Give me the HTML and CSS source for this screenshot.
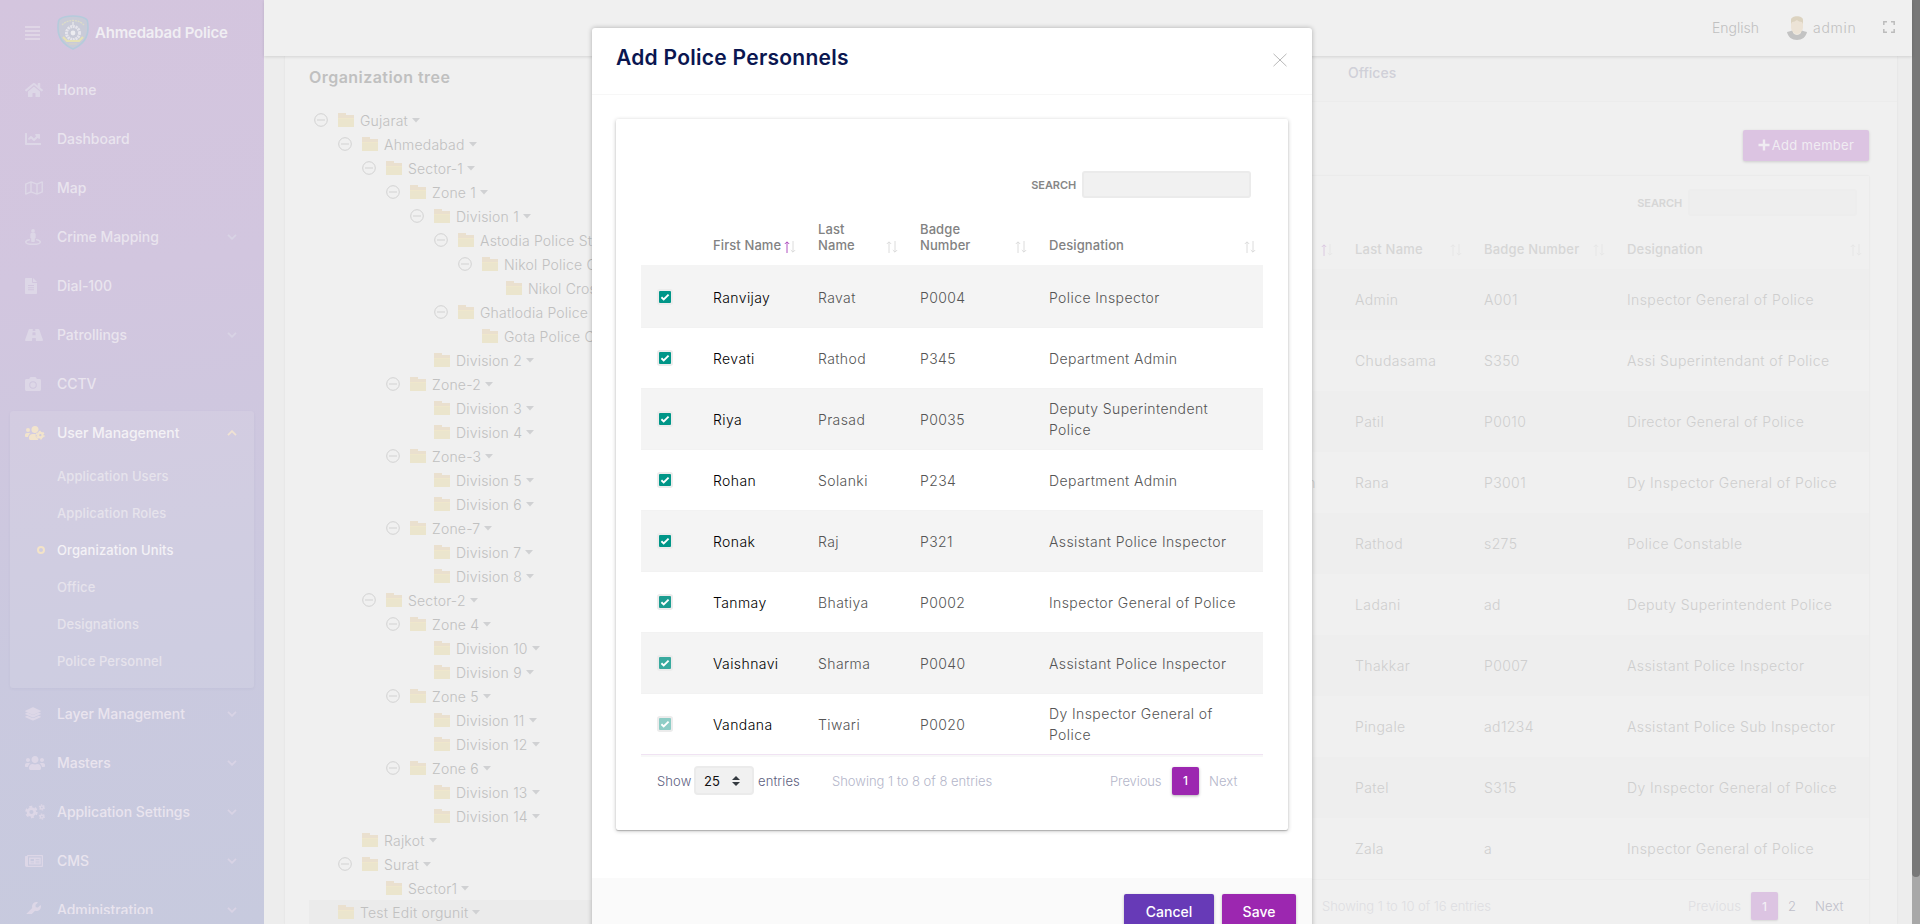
FILE: index.html
```html
<!DOCTYPE html>
<html lang="en">
<head>
<meta charset="utf-8">
<title>Organization Units</title>
<link rel="stylesheet" href="styles.css">
</head>
<body>
<svg class="sprite" aria-hidden="true">
  <symbol id="home" viewBox="0 0 576 512"><path d="M280.37 148.26L96 300.11V464a16 16 0 0 0 16 16l112.06-.29a16 16 0 0 0 15.92-16V368a16 16 0 0 1 16-16h64a16 16 0 0 1 16 16v95.64a16 16 0 0 0 16 16.05L464 480a16 16 0 0 0 16-16V300L295.67 148.26a12.19 12.19 0 0 0-15.3 0zM571.6 251.47L488 182.56V44.05a12 12 0 0 0-12-12h-56a12 12 0 0 0-12 12v72.61L318.47 43a48 48 0 0 0-61 0L4.34 251.47a12 12 0 0 0-1.6 16.9l25.5 31A12 12 0 0 0 45.15 301l235.22-193.74a12.19 12.19 0 0 1 15.3 0L530.9 301a12 12 0 0 0 16.9-1.6l25.5-31a12 12 0 0 0-1.7-16.93z"/></symbol>
  <symbol id="chart" viewBox="0 0 512 512"><path d="M496 384H64V80c0-8.84-7.16-16-16-16H16C7.16 64 0 71.16 0 80v336c0 17.67 14.33 32 32 32h464c8.84 0 16-7.16 16-16v-32c0-8.84-7.16-16-16-16zM464 96H345.94c-21.38 0-32.09 25.85-16.97 40.97l32.4 32.4L288 242.75l-73.37-73.37c-12.5-12.5-32.76-12.5-45.25 0l-68.69 68.69c-6.25 6.25-6.25 16.38 0 22.63l22.62 22.62c6.25 6.25 16.38 6.25 22.63 0L192 237.25l73.37 73.37c12.5 12.5 32.76 12.5 45.25 0l96-96 32.4 32.4c15.12 15.12 40.97 4.41 40.97-16.97V112c.01-8.84-7.15-16-15.99-16z"/></symbol>
  <symbol id="map" viewBox="0 0 576 512"><path fill="none" stroke="currentColor" stroke-width="46" stroke-linejoin="round" d="M24 130L192 62l192 68 168-68v320l-168 68-192-68-168 68zM192 62v320M384 130v320"/></symbol>
  <symbol id="street" viewBox="0 0 512 512"><circle cx="256" cy="60" r="60"/><path d="M216 130h80c26 0 46 20 46 46v92c0 18-12 30-28 36v76c0 20-14 34-32 34h-52c-18 0-32-14-32-34v-76c-16-6-28-18-28-36v-92c0-26 20-46 46-46z"/><path fill="none" stroke="currentColor" stroke-width="48" stroke-linecap="round" d="M140 344C70 358 24 378 24 412c0 46 104 76 232 76s232-30 232-76c0-34-46-54-116-68"/></symbol>
  <symbol id="file" viewBox="0 0 384 512"><path fill-rule="evenodd" d="M24 0h200v136c0 13 11 24 24 24h136v328c0 13-11 24-24 24H24c-13 0-24-11-24-24V24C0 11 11 0 24 0zM96 224v32h192v-32zM96 292v32h192v-32zM96 360v32h192v-32zM256 0l128 128H256z"/></symbol>
  <symbol id="road" viewBox="0 0 576 512"><path fill-rule="evenodd" d="M150 64h100l-4 60h84l-4-60h100c18 0 28 10 34 24l112 320c8 22-4 40-26 40H352l-8-96H232l-8 96H30c-22 0-34-18-26-40L116 88c6-14 16-24 34-24zM242 170l-6 96h104l-6-96z"/></symbol>
  <symbol id="camera" viewBox="0 0 512 512"><path fill-rule="evenodd" d="M512 144v288c0 26-22 48-48 48H48c-26 0-48-22-48-48V144c0-26 22-48 48-48h88l12-33c7-19 25-31 45-31h126c20 0 38 12 45 31l12 33h88c26 0 48 22 48 48zM376 288a120 120 0 1 0-240 0 120 120 0 0 0 240 0zm-32 0a88 88 0 1 1-176 0 88 88 0 0 1 176 0z"/></symbol>
  <symbol id="users" viewBox="0 0 640 512"><path d="M96 224c35.3 0 64-28.7 64-64s-28.7-64-64-64-64 28.7-64 64 28.7 64 64 64zm448 0c35.3 0 64-28.7 64-64s-28.7-64-64-64-64 28.7-64 64 28.7 64 64 64zm32 32h-64c-17.6 0-33.5 7.1-45.1 18.6 40.3 22.1 68.9 62 75.1 109.4h66c17.7 0 32-14.3 32-32v-32c0-35.3-28.7-64-64-64zm-256 0c61.9 0 112-50.1 112-112S381.9 32 320 32 208 82.1 208 144s50.1 112 112 112zm76.8 32h-8.3c-20.8 10-43.9 16-68.5 16s-47.6-6-68.5-16h-8.3C179.6 288 128 339.6 128 403.2V432c0 26.5 21.5 48 48 48h288c26.5 0 48-21.5 48-48v-28.8c0-63.6-51.6-115.2-115.2-115.2zm-223.7-13.4C161.5 263.1 145.6 256 128 256H64c-35.3 0-64 28.7-64 64v32c0 17.7 14.3 32 32 32h65.9c6.3-47.4 34.9-87.3 75.2-109.4z"/></symbol>
  <symbol id="userscog" viewBox="0 0 640 512"><circle cx="96" cy="160" r="64"/><circle cx="320" cy="144" r="112"/><path d="M173 274.600C161.500 263.100 145.600 256 128 256H64c-35.300 0-64 28.700-64 64v32c0 17.700 14.300 32 32 32h65.900c6.300-47.400 34.900-87.300 75.100-109.400zM251 288h-8c-63 0-115 52-115 115v29c0 26 22 48 48 48h250l-70-192z"/><circle cx="490" cy="325" r="112" fill="#cfcadf"/><circle cx="490" cy="325" r="142" fill="none" stroke="#cfcadf" stroke-width="18"/><circle cx="490" cy="325" r="72" fill="none" stroke="currentColor" stroke-width="70"/><circle cx="490" cy="325" r="120" fill="none" stroke="currentColor" stroke-width="44" stroke-dasharray="66 59.600"/></symbol>
  <symbol id="layers" viewBox="0 0 512 512"><path d="M12 148L244 42q12-5 24 0l232 106q20 12 0 24L268 278q-12 5-24 0L12 172q-20-12 0-24z"/><path d="M12 236l58-27 161 73q25 10 50 0l161-73 58 27q20 12 0 24L268 366q-12 5-24 0L12 260q-20-12 0-24z"/><path d="M12 334l58-26 161 73q25 10 50 0l161-73 58 26q20 12 0 24L268 464q-12 5-24 0L12 358q-20-12 0-24z"/></symbol>
  <symbol id="cogs" viewBox="0 0 640 512"><g fill="none" stroke="currentColor"><circle cx="205" cy="256" r="108" stroke-width="84"/><circle cx="205" cy="256" r="168" stroke-width="64" stroke-dasharray="94 82"/><circle cx="540" cy="110" r="50" stroke-width="46"/><circle cx="540" cy="110" r="82" stroke-width="36" stroke-dasharray="44 42"/><circle cx="540" cy="402" r="50" stroke-width="46"/><circle cx="540" cy="402" r="82" stroke-width="36" stroke-dasharray="44 42"/></g></symbol>
  <symbol id="news" viewBox="0 0 576 512"><path fill-rule="evenodd" d="M552 64H88c-13 0-24 11-24 24v8H24c-13 0-24 11-24 24v272c0 31 25 56 56 56h496c13 0 24-11 24-24V88c0-13-11-24-24-24zM96 104h440v304H96zM140 144h352c8 0 12 4 12 12v200c0 8-4 12-12 12H140c-8 0-12-4-12-12V156c0-8 4-12 12-12zM176 192v70h110v-70zM340 192v24h120v-24zM340 250v24h120v-24zM176 304v24h110v-24zM340 304v24h120v-24z"/></symbol>
  <symbol id="wrench" viewBox="0 0 512 512"><path d="M507.730 109.100c-2.240-9.030-13.540-12.090-20.120-5.510l-74.360 74.360-67.880-11.310-11.310-67.880 74.360-74.360c6.620-6.620 3.430-17.900-5.660-20.160-47.380-11.740-99.550.91-136.580 37.930-39.640 39.640-50.550 97.100-34.050 147.200L18.740 402.760c-24.990 24.990-24.990 65.510 0 90.500 24.990 24.990 65.510 24.990 90.500 0l213.210-213.210c50.120 16.710 107.470 5.680 147.370-34.220 37.070-37.070 49.700-89.320 37.910-136.730z"/></symbol>
  <symbol id="chev" viewBox="0 0 10 6"><path fill="none" stroke="currentColor" stroke-width="1.800" d="M1 .8L5 4.800 9 .8"/></symbol>
  <symbol id="minus" viewBox="0 0 14 14"><circle cx="7" cy="7" r="6.300" fill="none" stroke="#d2d2d2"/><path stroke="#d2d2d2" d="M3 7h8"/></symbol>
  <symbol id="folder" viewBox="0 0 16 14"><path fill="#eae0cf" d="M0 0h8v2h8v12H0z"/><path fill="#ebe5cd" d="M0 5h16v9H0z"/><path fill="#efe7cc" d="M0 5h16v1H0z"/></symbol>
  <symbol id="caret" viewBox="0 0 8 5"><path fill="#d0d1d3" d="M0 0h8L4 4.500z"/></symbol>
  <symbol id="up" viewBox="0 0 6 12"><path fill="none" stroke="currentColor" stroke-width=".8" d="M3 12V1M.8 3L3 .8 5.200 3"/></symbol>
  <symbol id="down" viewBox="0 0 6 12"><path fill="none" stroke="currentColor" stroke-width=".8" d="M3 0v11M.8 9L3 11.200 5.200 9"/></symbol>
  <symbol id="check" viewBox="0 0 12 12"><path fill="none" stroke="#fff" stroke-width="1.900" d="M2.400 6.200l2.300 2.200 4.900-4.800"/></symbol>
</svg>

<div class="app">
  <aside class="sidebar">
    <div class="brand">
      <svg class="burger" viewBox="0 0 15 14"><path stroke="currentColor" stroke-width="1.600" d="M0 1h15M0 5h15M0 9h15M0 13h15"/></svg>
      <svg class="logo" viewBox="0 0 32 35"><path fill="#c9cbd8" stroke="#b5cbdc" stroke-width="1.600" d="M16 1c5 0 10 1 13 3l1 1c1 2 1 5 1 8 0 10-6 17-15 21C7 30 1 23 1 13c0-3 0-6 1-8l1-1C6 2 11 1 16 1z"/><path fill="none" stroke="#dcdcc8" stroke-width="1.400" stroke-dasharray="2 .8" d="M5 10C11 4 21 4 27 10"/><circle cx="16" cy="18" r="6.500" fill="none" stroke="#e6e5ec" stroke-width="3" stroke-dasharray="2 .7"/><path fill="#e2e2e8" d="M15.200 7h1.600v4h-1.600z"/><circle cx="16" cy="18" r="2.400" fill="#ececf0"/><path fill="none" stroke="#e5e1b4" stroke-width="2.200" d="M6 22l4 4h12l4-4"/><path stroke="#d8d4c4" d="M12 29h8"/></svg>
      <span>Ahmedabad Police</span>
    </div>
    <nav class="nav">
      <a class="item"><svg class="i9"><use href="#home"/></svg><span>Home</span></a>
      <a class="item"><svg class="i8"><use href="#chart"/></svg><span>Dashboard</span></a>
      <a class="item"><svg class="i9"><use href="#map"/></svg><span>Map</span></a>
      <a class="item"><svg class="i8"><use href="#street"/></svg><span>Crime Mapping</span><svg class="chev"><use href="#chev"/></svg></a>
      <a class="item"><svg class="i6"><use href="#file"/></svg><span>Dial-100</span></a>
      <a class="item"><svg class="i9"><use href="#road"/></svg><span>Patrollings</span><svg class="chev"><use href="#chev"/></svg></a>
      <a class="item"><svg class="i8"><use href="#camera"/></svg><span>CCTV</span></a>
      <div class="group">
        <a class="item open"><svg class="i10"><use href="#userscog"/></svg><span>User Management</span><svg class="chev"><use href="#chev"/></svg></a>
        <a class="sub">Application Users</a>
        <a class="sub">Application Roles</a>
        <a class="sub current">Organization Units</a>
        <a class="sub">Office</a>
        <a class="sub">Designations</a>
        <a class="sub">Police Personnel</a>
      </div>
      <a class="item"><svg class="i8"><use href="#layers"/></svg><span>Layer Management</span><svg class="chev"><use href="#chev"/></svg></a>
      <a class="item"><svg class="i10"><use href="#users"/></svg><span>Masters</span><svg class="chev"><use href="#chev"/></svg></a>
      <a class="item"><svg class="i10"><use href="#cogs"/></svg><span>Application Settings</span><svg class="chev"><use href="#chev"/></svg></a>
      <a class="item"><svg class="i9"><use href="#news"/></svg><span>CMS</span><svg class="chev"><use href="#chev"/></svg></a>
      <a class="item"><svg class="i8"><use href="#wrench"/></svg><span>Administration</span><svg class="chev"><use href="#chev"/></svg></a>
    </nav>
  </aside>

  <div class="main">
    <header class="topbar">
      <span class="lang">English</span>
      <svg class="avatar" viewBox="0 0 20 24"><path fill="#c3c3c3" d="M0 16c3-1 5-1 6-2h8c1 1 3 1 6 2-1 5-5 8-10 8S1 21 0 16z"/><path fill="#f0ebe2" d="M6 13h8v4q-4 4-8 0z"/><path fill="#ece3d6" d="M4 5c0-4 12-4 12 0v6c0 4-3 7-6 7s-6-3-6-7z"/><path fill="#dcd3c0" d="M4 8V4c0-5 12-5 12 0v4l-1-2c-2 0-4-1-5-2-2 1-3 2-5 2z"/></svg>
      <span class="user">admin</span>
      <svg class="full" viewBox="0 0 12 12"><path fill="none" stroke="#bcbcbc" stroke-width="1.500" d="M.8 4V.8H4M8 .8h3.200V4M11.200 8v3.200H8M4 11.200H.8V8"/></svg>
    </header>
    <div class="content">
      <section class="tree">
        <h2>Organization tree</h2>
        <div class="node l0"><svg class="tg"><use href="#minus"/></svg><svg class="fd"><use href="#folder"/></svg>Gujarat<svg class="ct"><use href="#caret"/></svg></div>
        <div class="node l1"><svg class="tg"><use href="#minus"/></svg><svg class="fd"><use href="#folder"/></svg>Ahmedabad<svg class="ct"><use href="#caret"/></svg></div>
        <div class="node l2"><svg class="tg"><use href="#minus"/></svg><svg class="fd"><use href="#folder"/></svg>Sector-1<svg class="ct"><use href="#caret"/></svg></div>
        <div class="node l3"><svg class="tg"><use href="#minus"/></svg><svg class="fd"><use href="#folder"/></svg>Zone 1<svg class="ct"><use href="#caret"/></svg></div>
        <div class="node l4"><svg class="tg"><use href="#minus"/></svg><svg class="fd"><use href="#folder"/></svg>Division 1<svg class="ct"><use href="#caret"/></svg></div>
        <div class="node l5"><svg class="tg"><use href="#minus"/></svg><svg class="fd"><use href="#folder"/></svg>Astodia Police Station</div>
        <div class="node l6"><svg class="tg"><use href="#minus"/></svg><svg class="fd"><use href="#folder"/></svg>Nikol Police Chowki</div>
        <div class="node l7"><svg class="tg"></svg><svg class="fd"><use href="#folder"/></svg>Nikol Cross</div>
        <div class="node l5"><svg class="tg"><use href="#minus"/></svg><svg class="fd"><use href="#folder"/></svg>Ghatlodia Police Station</div>
        <div class="node l6"><svg class="tg"></svg><svg class="fd"><use href="#folder"/></svg>Gota Police Chowki</div>
        <div class="node l4"><svg class="tg"></svg><svg class="fd"><use href="#folder"/></svg>Division 2<svg class="ct"><use href="#caret"/></svg></div>
        <div class="node l3"><svg class="tg"><use href="#minus"/></svg><svg class="fd"><use href="#folder"/></svg>Zone-2<svg class="ct"><use href="#caret"/></svg></div>
        <div class="node l4"><svg class="tg"></svg><svg class="fd"><use href="#folder"/></svg>Division 3<svg class="ct"><use href="#caret"/></svg></div>
        <div class="node l4"><svg class="tg"></svg><svg class="fd"><use href="#folder"/></svg>Division 4<svg class="ct"><use href="#caret"/></svg></div>
        <div class="node l3"><svg class="tg"><use href="#minus"/></svg><svg class="fd"><use href="#folder"/></svg>Zone-3<svg class="ct"><use href="#caret"/></svg></div>
        <div class="node l4"><svg class="tg"></svg><svg class="fd"><use href="#folder"/></svg>Division 5<svg class="ct"><use href="#caret"/></svg></div>
        <div class="node l4"><svg class="tg"></svg><svg class="fd"><use href="#folder"/></svg>Division 6<svg class="ct"><use href="#caret"/></svg></div>
        <div class="node l3"><svg class="tg"><use href="#minus"/></svg><svg class="fd"><use href="#folder"/></svg>Zone-7<svg class="ct"><use href="#caret"/></svg></div>
        <div class="node l4"><svg class="tg"></svg><svg class="fd"><use href="#folder"/></svg>Division 7<svg class="ct"><use href="#caret"/></svg></div>
        <div class="node l4"><svg class="tg"></svg><svg class="fd"><use href="#folder"/></svg>Division 8<svg class="ct"><use href="#caret"/></svg></div>
        <div class="node l2"><svg class="tg"><use href="#minus"/></svg><svg class="fd"><use href="#folder"/></svg>Sector-2<svg class="ct"><use href="#caret"/></svg></div>
        <div class="node l3"><svg class="tg"><use href="#minus"/></svg><svg class="fd"><use href="#folder"/></svg>Zone 4<svg class="ct"><use href="#caret"/></svg></div>
        <div class="node l4"><svg class="tg"></svg><svg class="fd"><use href="#folder"/></svg>Division 10<svg class="ct"><use href="#caret"/></svg></div>
        <div class="node l4"><svg class="tg"></svg><svg class="fd"><use href="#folder"/></svg>Division 9<svg class="ct"><use href="#caret"/></svg></div>
        <div class="node l3"><svg class="tg"><use href="#minus"/></svg><svg class="fd"><use href="#folder"/></svg>Zone 5<svg class="ct"><use href="#caret"/></svg></div>
        <div class="node l4"><svg class="tg"></svg><svg class="fd"><use href="#folder"/></svg>Division 11<svg class="ct"><use href="#caret"/></svg></div>
        <div class="node l4"><svg class="tg"></svg><svg class="fd"><use href="#folder"/></svg>Division 12<svg class="ct"><use href="#caret"/></svg></div>
        <div class="node l3"><svg class="tg"><use href="#minus"/></svg><svg class="fd"><use href="#folder"/></svg>Zone 6<svg class="ct"><use href="#caret"/></svg></div>
        <div class="node l4"><svg class="tg"></svg><svg class="fd"><use href="#folder"/></svg>Division 13<svg class="ct"><use href="#caret"/></svg></div>
        <div class="node l4"><svg class="tg"></svg><svg class="fd"><use href="#folder"/></svg>Division 14<svg class="ct"><use href="#caret"/></svg></div>
        <div class="node l1"><svg class="tg"></svg><svg class="fd"><use href="#folder"/></svg>Rajkot<svg class="ct"><use href="#caret"/></svg></div>
        <div class="node l1"><svg class="tg"><use href="#minus"/></svg><svg class="fd"><use href="#folder"/></svg>Surat<svg class="ct"><use href="#caret"/></svg></div>
        <div class="node l2"><svg class="tg"></svg><svg class="fd"><use href="#folder"/></svg>Sector1<svg class="ct"><use href="#caret"/></svg></div>
        <div class="node l0 sel"><svg class="tg"></svg><svg class="fd"><use href="#folder"/></svg>Test Edit orgunit<svg class="ct"><use href="#caret"/></svg></div>
      </section>
      <section class="members">
        <div class="tabs"><span>Offices</span></div>
        <div class="pane">
          <button class="add"><svg viewBox="0 0 12 12"><path stroke="#f0ecf2" stroke-width="2.400" d="M6 .5v11M.5 6h11"/></svg>Add member</button>
          <div class="box">
            <div class="search dim"><label>SEARCH</label><div class="input"></div></div>
            <div class="grid bg head"><div><svg class="up on"><use href="#up"/></svg><svg class="dn"><use href="#down"/></svg></div><div>Last Name<svg class="up"><use href="#up"/></svg><svg class="dn"><use href="#down"/></svg></div><div>Badge Number<svg class="up"><use href="#up"/></svg><svg class="dn"><use href="#down"/></svg></div><div>Designation<svg class="up"><use href="#up"/></svg><svg class="dn"><use href="#down"/></svg></div></div>
            <div class="grid bg row odd"><div></div><div>Admin</div><div>A001</div><div>Inspector General of Police</div></div>
            <div class="grid bg row"><div></div><div>Chudasama</div><div>S350</div><div>Assi Superintendant of Police</div></div>
            <div class="grid bg row odd"><div></div><div>Patil</div><div>P0010</div><div>Director General of Police</div></div>
            <div class="grid bg row"><div class="tail">n</div><div>Rana</div><div>P3001</div><div>Dy Inspector General of Police</div></div>
            <div class="grid bg row odd"><div></div><div>Rathod</div><div>s275</div><div>Police Constable</div></div>
            <div class="grid bg row"><div></div><div>Ladani</div><div>ad</div><div>Deputy Superintendent Police</div></div>
            <div class="grid bg row odd"><div></div><div>Thakkar</div><div>P0007</div><div>Assistant Police Inspector</div></div>
            <div class="grid bg row"><div></div><div>Pingale</div><div>ad1234</div><div>Assistant Police Sub Inspector</div></div>
            <div class="grid bg row odd"><div></div><div>Patel</div><div>S315</div><div>Dy Inspector General of Police</div></div>
            <div class="grid bg row"><div></div><div>Zala</div><div>a</div><div>Inspector General of Police</div></div>
            <div class="foot bgfoot"><span class="info">Showing 1 to 10 of 16 entries</span><span class="prev">Previous</span><b class="page">1</b><span class="two">2</span><span class="next">Next</span></div>
          </div>
        </div>
      </section>
    </div>
  </div>

  <div class="modal">
    <div class="mhead"><h1>Add Police Personnels</h1><svg class="close" viewBox="0 0 14 14"><path stroke="#b9b9b9" d="M.5.800l13 12.400M13.500.800L.5 13.200"/></svg></div>
    <div class="mbody">
      <div class="card">
        <div class="search"><label>SEARCH</label><div class="input"></div></div>
        <div class="grid fg head"><div></div><div>First Name<svg class="up on"><use href="#up"/></svg><svg class="dn"><use href="#down"/></svg></div><div>Last<br>Name<svg class="up"><use href="#up"/></svg><svg class="dn"><use href="#down"/></svg></div><div>Badge<br>Number<svg class="up"><use href="#up"/></svg><svg class="dn"><use href="#down"/></svg></div><div>Designation<svg class="up"><use href="#up"/></svg><svg class="dn"><use href="#down"/></svg></div></div>
        <div class="grid fg row odd"><div><svg class="cb"><use href="#check"/></svg></div><div>Ranvijay</div><div>Ravat</div><div>P0004</div><div>Police Inspector</div></div>
        <div class="grid fg row"><div><svg class="cb"><use href="#check"/></svg></div><div>Revati</div><div>Rathod</div><div>P345</div><div>Department Admin</div></div>
        <div class="grid fg row odd"><div><svg class="cb"><use href="#check"/></svg></div><div>Riya</div><div>Prasad</div><div>P0035</div><div>Deputy Superintendent<br>Police</div></div>
        <div class="grid fg row"><div><svg class="cb"><use href="#check"/></svg></div><div>Rohan</div><div>Solanki</div><div>P234</div><div>Department Admin</div></div>
        <div class="grid fg row odd"><div><svg class="cb"><use href="#check"/></svg></div><div>Ronak</div><div>Raj</div><div>P321</div><div>Assistant Police Inspector</div></div>
        <div class="grid fg row"><div><svg class="cb c6"><use href="#check"/></svg></div><div>Tanmay</div><div>Bhatiya</div><div>P0002</div><div>Inspector General of Police</div></div>
        <div class="grid fg row odd"><div><svg class="cb c7"><use href="#check"/></svg></div><div>Vaishnavi</div><div>Sharma</div><div>P0040</div><div>Assistant Police Inspector</div></div>
        <div class="grid fg row last"><div><svg class="cb c8"><use href="#check"/></svg></div><div>Vandana</div><div>Tiwari</div><div>P0020</div><div>Dy Inspector General of<br>Police</div></div>
        <div class="foot fgfoot">
          <span class="show">Show</span>
          <span class="select">25<svg viewBox="0 0 8 10"><path fill="#343a40" d="M4 0l4 4H0zM0 6h8l-4 4z"/></svg></span>
          <span class="entries">entries</span>
          <span class="info">Showing 1 to 8 of 8 entries</span>
          <span class="prev">Previous</span><b class="page">1</b><span class="next">Next</span>
        </div>
      </div>
    </div>
    <div class="mfoot"><button class="cancel">Cancel</button><button class="save">Save</button></div>
  </div>

  <div class="scrollbar"><div class="thumb"></div></div>
</div>
</body>
</html>
```
FILE: styles.css
```css
*, *::before { box-sizing: border-box; }
body { margin: 0; font-family: Inter, "Open Sans", sans-serif; font-size: 14px; font-weight: 300; overflow: hidden; }
.sprite { position: absolute; width: 0; height: 0; }
svg { flex: none; fill: currentColor; }
h1, h2 { margin: 0; }
button { border: 0; font-family: inherit; padding: 0; }

.app { position: relative; display: flex; width: 1920px; height: 924px; overflow: hidden; background: #ededed; }

/* Sidebar */
.sidebar { width: 264px; height: 924px; padding-bottom: 10px; background: linear-gradient(172deg, #d4c5de 0%, #d2c6df 30%, #cac9df 70%, #c7cade 100%); font-weight: 500; color: #e9e4ee; }
.brand { display: flex; align-items: center; height: 65px; padding-left: 25px; font-size: 15px; font-weight: 600; letter-spacing: -.2px; color: #f0eef3; }
.brand svg { color: #e3dce9; }
.burger { width: 15px; height: 14px; margin-right: 17px; }
.logo { width: 32px; height: 35px; margin-right: 6px; }
.nav { height: 849px; overflow: hidden; letter-spacing: -.05px; }
.item { display: flex; align-items: center; height: 49px; padding: 0 27px 0 25px; }
.item > svg:first-child { height: 16px; color: #ddd7e7; }
.item > span { flex: 1; }
.i6 { width: 12px; margin-right: 20px; }
.i8 { width: 16px; margin-right: 16px; }
.i9 { width: 18px; margin-right: 14px; }
.i10 { width: 20px; margin-right: 12px; }
.chev { width: 10px; height: 6px; color: #d8d3e5; }
.group { margin: 3px 10px 1px; height: 277px; background: rgba(255,255,255,.09); border-radius: 3px; box-shadow: 0 1px 3px rgba(90,80,140,.06); }
.group .item { height: 43px; padding: 0 17px 0 15px; color: #f3f1f5; }
.group .item > svg:first-child { color: #f2e4cc; }
.open .chev { transform: rotate(180deg); color: #f0e2d3; }
.sub { display: flex; align-items: center; height: 37px; padding-left: 47px; font-size: 13px; color: #e6e3ec; letter-spacing: .1px; }
.open + .sub { margin-top: 3px; }
.current { color: #f4f2f6; padding-left: 27px; }
.current::before { content: ""; width: 8px; height: 8px; border: 2px solid #f3e3c8; border-radius: 50%; margin-right: 12px; }

/* Top bar */
.main { width: 1648px; display: flex; flex-direction: column; }
.topbar { height: 56px; background: #f0f0f0; box-shadow: 0 1px 3px rgba(0,0,0,.12); display: flex; align-items: center; justify-content: flex-end; padding: 0 17px 2px 0; color: #c0c0c0; z-index: 1; flex: none; }
.avatar { width: 20px; height: 24px; margin: 2px 6px 0 29px; }
.full { width: 12px; height: 12px; margin-left: 25px; }
.lang { width: 46px; }
.user { width: 45px; letter-spacing: .7px; }

/* Content */
.content { display: flex; height: 868px; margin: 0 15px 0 21px; background: #f0f0f0; box-shadow: 0 0 2px rgba(0,0,0,.07); }
.tree { width: 600px; padding: 9px 0 0 24px; color: #c0c0c0; flex: none; }
.tree h2 { font-size: 16px; font-weight: 600; line-height: 24px; margin-bottom: 19px; letter-spacing: .45px; }
.node { display: flex; align-items: center; height: 24px; white-space: nowrap; letter-spacing: .2px; }
.tg { width: 14px; height: 14px; margin: 0 10px 0 5px; }
.fd { width: 16px; height: 14px; margin-right: 6px; }
.ct { width: 8px; height: 5px; margin-left: 4px; }
.l1 { padding-left: 24px; } .l2 { padding-left: 48px; } .l3 { padding-left: 72px; } .l4 { padding-left: 96px; }
.l5 { padding-left: 120px; } .l6 { padding-left: 144px; } .l7 { padding-left: 168px; }
.sel { background: #ebebeb; }
.members { flex: 1; display: flex; flex-direction: column; }
.tabs { flex: none; height: 46px; border-bottom: 1px solid #ececec; background: #efefef; display: flex; align-items: center; padding: 0 0 13px 463px; font-weight: 500; color: #d0d0d8; }
.pane { flex: none; padding: 28px 28px 0 315px; display: flex; flex-direction: column; }
.add { align-self: flex-end; width: 126px; height: 31px; background: #dcc4e2; color: #f0ecf2; border-radius: 2px; box-shadow: 0 1px 3px rgba(0,0,0,.15); display: flex; align-items: center; justify-content: center; gap: 2px; font-size: 13px; letter-spacing: .3px; padding-bottom: 2px; }
.add svg { width: 12px; height: 12px; }
.box { margin-top: 15px; padding-top: 13px; box-shadow: 0 0 2px rgba(0,0,0,.07); height: 780px; }

/* Tables */
.search { display: flex; justify-content: flex-end; align-items: center; gap: 6px; height: 27px; padding-right: 12px; font-size: 11px; font-weight: 600; color: #868686; letter-spacing: -.1px; }
.input { width: 169px; height: 27px; background: #f1f1f1; border: 2px solid #ebebeb; border-radius: 3px; }
.dim { color: #d6d6d6; }
.dim .input { background: #eee; border-color: #ededed; }
.grid { display: grid; }
.fg { grid-template-columns: 57px 105px 102px 129px 229px; }
.bg { grid-template-columns: 140px 129px 143px 257px; color: #cecece; }
.grid > div { display: flex; align-items: center; padding-left: 15px; }
.head { font-size: 13px; font-weight: 500; }
.head > div { position: relative; }
.fg.head { height: 69px; border-bottom: 2px solid #f4f4f4; color: #828282; line-height: 16px; letter-spacing: .1px; }
.fg.head > div { align-items: flex-end; padding-bottom: 12px; }
.bg.head { height: 53px; color: #d6d6d6; padding-top: 13px; letter-spacing: .2px; }
.up, .dn { position: absolute; width: 6px; height: 12px; bottom: 12px; color: #d3d3d3; }
.up { right: 13px; } .dn { right: 7px; }
.bg .up, .bg .dn { bottom: 13px; color: #e3e3e3; }
.up.on { color: #9c27b0; }
.bg .up.on { color: #d6bfdd; }
.row { height: 61px; line-height: 21px; letter-spacing: .4px; white-space: nowrap; }
.fg.row { color: #555; border-bottom: 1px solid #f2f2f2; }
.fg.row > div:nth-child(2) { color: #000; }
.fg.odd { background: #f4f4f4; }
.bg.odd { background: #eee; }
.bg.row .tail { justify-content: flex-end; padding-right: 24px; }
.cb { width: 12px; height: 12px; margin-left: 3px; background: #009688; border-radius: 1px; box-shadow: 0 0 0 2px #ececec; }
.grid .cb.c6 { background: #1b9c90; } .grid .cb.c7 { background: #39aa9f; } .grid .cb.c8 { background: #8ecdc6; }
.foot { display: flex; align-items: center; font-size: 13px; white-space: nowrap; letter-spacing: .1px; }
.page { width: 27px; height: 28px; background: #9c27b0; color: #fff; border-radius: 2px; font-size: 12px; font-weight: 500; display: flex; align-items: center; justify-content: center; box-shadow: 0 1px 3px rgba(0,0,0,.3); }
.bgfoot { height: 53px; border-top: 1px solid #ececec; padding-left: 122px; color: #dedee2; }
.bgfoot .info { width: 366px; letter-spacing: -.05px; }
.bgfoot .prev { width: 63px; }
.bgfoot .page { background: #dcc4e2; color: #f3eff5; box-shadow: 0 1px 2px rgba(0,0,0,.1); }
.bgfoot .two { margin: 0 19px 0 10px; color: #bfbfca; }
.bgfoot .next { color: #bfbfca; }

/* Modal */
.modal { position: absolute; z-index: 2; left: 592px; top: 28px; width: 720px; height: 920px; background: #fff; border-radius: 3px; box-shadow: 0 0 5px rgba(0,0,0,.28); }
.mhead { height: 67px; border-bottom: 1px solid #f7f7f7; display: flex; justify-content: space-between; padding: 15px 25px 0 24px; }
.mhead h1 { font-size: 21px; font-weight: 600; line-height: 30px; color: #0a1650; letter-spacing: .27px; }
.close { width: 14px; height: 14px; margin-top: 10px; }
.mbody { padding: 24px 24px 0; height: 783px; }
.card { height: 711px; padding: 52px 25px 0; border-radius: 2px; box-shadow: 0 1px 4px rgba(0,0,0,.24), 0 1px 1px rgba(0,0,0,.2); }
.fgfoot { height: 51px; padding-left: 16px; color: #5d6080; }
.last.row { border-bottom: 1px solid #f0e3f3; box-shadow: 0 2px 0 #f8f8f8; }
.show { width: 37px; }
.select { width: 60px; height: 29px; background: #f1f1f1; border: 2px solid #ebebeb; border-radius: 4px; display: flex; align-items: center; justify-content: space-between; padding: 0 12px 0 8px; color: #111; font-weight: 400; }
.select svg { width: 8px; height: 10px; }
.entries { width: 78px; padding-left: 4px; }
.fgfoot .info { width: 278px; color: #b4b6ca; letter-spacing: 0; }
.fgfoot .prev { width: 62px; color: #b4b6ca; letter-spacing: -.1px; }
.fgfoot .next { margin-left: 10px; color: #b4b6ca; }
.mfoot { height: 70px; background: #fafafa; display: flex; justify-content: flex-end; gap: 8px; padding: 16px 16px 0; }
.mfoot button { height: 35px; color: #fff; font-size: 14px; font-weight: 500; border-radius: 2px; box-shadow: 0 1px 3px rgba(0,0,0,.25); }
.cancel { width: 90px; background: #673ab7; }
.save { width: 74px; background: #9c27b0; }

/* Page scrollbar */
.scrollbar { width: 8px; height: 924px; background: #a8a8a8; }
.thumb { width: 8px; height: 877px; background: #787878; border-radius: 0 0 4px 4px; }
```
